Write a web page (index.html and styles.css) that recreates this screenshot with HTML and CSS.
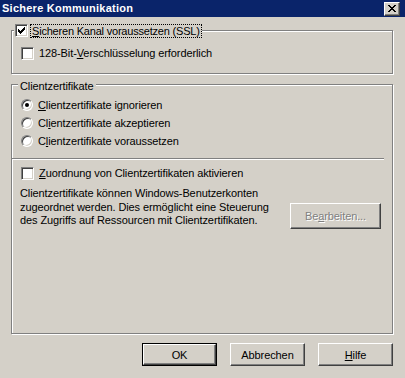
FILE: index.html
```html
<!DOCTYPE html>
<html lang="de">
<head>
<meta charset="utf-8">
<title>Sichere Kommunikation</title>
<link rel="stylesheet" href="styles.css">
</head>
<body>
<div class="dlg">
  <div class="titlebar">
    <span class="title">Sichere Kommunikation</span>
    <span class="close"><svg width="8" height="7" viewBox="0 0 8 7" shape-rendering="crispEdges"><path fill="#000" d="M0 0h2v1h-2zM6 0h2v1h-2zM1 1h2v1h-2zM5 1h2v1h-2zM2 2h4v1h-4zM3 3h2v1h-2zM2 4h4v1h-4zM1 5h2v1h-2zM5 5h2v1h-2zM0 6h2v1h-2zM6 6h2v1h-2z"/></svg></span>
  </div>
  <div class="content">
    <div class="group group-ssl">
      <div class="legend legend-check">
        <span class="cb checked"><svg width="7" height="7" viewBox="0 0 7 7" shape-rendering="crispEdges"><path fill="#000" d="M0 2h1v3h-1zM1 3h1v3h-1zM2 4h1v3h-1zM3 3h1v3h-1zM4 2h1v3h-1zM5 1h1v3h-1zM6 0h1v3h-1z"/></svg></span>
        <span class="focus"><u>S</u>icheren Kanal voraussetzen (SSL)</span>
      </div>
      <div class="row"><span class="cb"></span><span class="lbl">128-Bit-<u>V</u>erschlüsselung erforderlich</span></div>
    </div>
    <div class="group group-client">
      <div class="legend legend-text">Clientzertifikate</div>
      <div class="radios">
        <div class="row"><span class="rb on"></span><span class="lbl rl"><u>C</u>lientzertifikate ignorieren</span></div>
        <div class="row"><span class="rb"></span><span class="lbl rl">Cl<u>i</u>entzertifikate akzeptieren</span></div>
        <div class="row"><span class="rb"></span><span class="lbl rl">C<u>l</u>ientzertifikate voraussetzen</span></div>
      </div>
      <div class="sep"></div>
      <div class="row row-map"><span class="cb"></span><span class="lbl"><u>Z</u>uordnung von Clientzertifikaten aktivieren</span></div>
      <div class="mapping">
        <p class="desc">Clientzertifikate können Windows-Benutzerkonten<br>zugeordnet werden. Dies ermöglicht eine Steuerung<br>des Zugriffs auf Ressourcen mit Clientzertifikaten.</p>
        <span class="btn btn-edit disabled">Be<u>a</u>rbeiten...</span>
      </div>
    </div>
    <div class="buttons">
      <span class="btn default"><span class="btn-face">OK</span></span>
      <span class="btn">Abbrechen</span>
      <span class="btn"><u>H</u>ilfe</span>
    </div>
  </div>
</div>
</body>
</html>
```
FILE: styles.css
```css
html, body {
  margin: 0;
  padding: 0;
  background: #d4d0c8;
}
.dlg {
  width: 405px;
  height: 378px;
  background: #d4d0c8;
  font-family: "Liberation Sans", Arial, sans-serif;
  font-size: 11px;
  letter-spacing: -0.1px;
  color: #000;
  overflow: hidden;
}
.titlebar {
  height: 17px;
  background: #0a246a;
  display: flex;
  align-items: center;
  justify-content: space-between;
  padding: 0 5px 0 2px;
}
.title {
  color: #fff;
  font-weight: bold;
  font-size: 11px;
  letter-spacing: 0.25px;
  line-height: 17px;
}
.close {
  width: 16px;
  height: 14px;
  box-sizing: border-box;
  background: #d4d0c8;
  border: 1px solid;
  border-color: #fff #404040 #404040 #fff;
  box-shadow: inset -1px -1px 0 #808080;
  display: flex;
  align-items: center;
  justify-content: center;
  padding: 0 0 1px 0;
}
.close svg { display: block; }
.content {
  padding: 0 12px 0 11px;
}
.group {
  position: relative;
  box-sizing: border-box;
  border: 1px solid #808080;
  box-shadow: 1px 1px 0 #fff, inset 1px 1px 0 #fff;
}
.group-ssl {
  margin-top: 13px;
  height: 44px;
  padding-top: 13px;
}
.group-client {
  margin-top: 10px;
  height: 250px;
  padding-top: 11px;
}
.legend {
  position: absolute;
  background: #d4d0c8;
  display: flex;
  align-items: center;
  height: 13px;
  line-height: 13px;
}
.legend-check {
  left: 2px;
  top: -7px;
  padding: 0 1px 0 1px;
}
.legend-check .focus {
  margin-left: 3px;
  padding: 0 1px;
  outline: 1px dotted #000;
  outline-offset: 0;
  line-height: 12px;
  letter-spacing: -0.2px;
}
.legend-text {
  left: 6px;
  top: -5px;
  padding: 0 2px;
}
.row {
  display: flex;
  align-items: center;
  height: 18px;
  padding-left: 9px;
}
.lbl {
  margin-left: 5px;
  white-space: nowrap;
}
.rl { margin-left: 5px; }
.cb {
  width: 13px;
  height: 13px;
  box-sizing: border-box;
  flex: none;
  background: #fff;
  border: 1px solid;
  border-color: #808080 #fff #fff #808080;
  box-shadow: inset 1px 1px 0 #404040, inset -1px -1px 0 #d4d0c8;
  display: flex;
  align-items: center;
  justify-content: center;
}
.cb svg { display: block; }
.rb {
  position: relative;
  width: 12px;
  height: 12px;
  box-sizing: border-box;
  flex: none;
  border-radius: 50%;
  background: #fff;
  border: 1px solid;
  border-color: #808080 #fff #fff #808080;
  box-shadow: inset 1px 1px 0 #404040, inset -1px -1px 0 #d4d0c8;
}
.rb.on::after {
  content: "";
  position: absolute;
  left: 3px;
  top: 3px;
  width: 4px;
  height: 4px;
  border-radius: 50%;
  background: #000;
}
.sep {
  margin-top: 8px;
  width: 372px;
  height: 0;
  border-top: 1px solid #808080;
  border-bottom: 1px solid #fff;
}
.row-map { margin-top: 4px; }
.mapping {
  display: flex;
  align-items: flex-start;
  margin-top: 5px;
  padding-left: 8px;
}
.desc {
  margin: 0;
  line-height: 13.5px;
  white-space: nowrap;
}
.btn {
  width: 75px;
  height: 23px;
  box-sizing: border-box;
  display: flex;
  align-items: center;
  justify-content: center;
  background: #d4d0c8;
  border: 1px solid;
  border-color: #fff #404040 #404040 #fff;
  box-shadow: inset -1px -1px 0 #808080;
  white-space: nowrap;
}
.btn-edit {
  width: 91px;
  height: 26px;
  margin: 16px 11px 0 auto;
}
.disabled {
  color: #808080;
  text-shadow: 1px 1px 0 #fff;
}
.buttons {
  display: flex;
  justify-content: flex-end;
  gap: 13px;
  margin-top: 9px;
}
.btn.default {
  border: 1px solid #000;
  box-shadow: none;
  padding: 0;
}
.btn-face {
  width: 100%;
  height: 100%;
  box-sizing: border-box;
  display: flex;
  align-items: center;
  justify-content: center;
  border: 1px solid;
  border-color: #fff #404040 #404040 #fff;
  box-shadow: inset -1px -1px 0 #808080;
}
```
